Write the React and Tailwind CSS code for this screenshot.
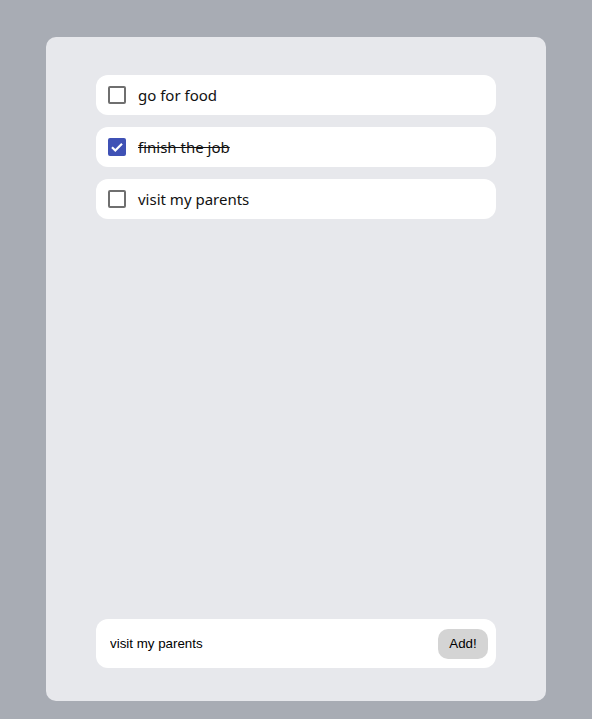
import { useState } from 'react'

const initialTodos = [
  { id: 1, text: 'go for food', done: false },
  { id: 2, text: 'finish the job', done: true },
  { id: 3, text: 'visit my parents', done: false }
]

function Checkbox({ checked, onChange }) {
  return (
    <span className="relative flex h-[18px] w-[18px] shrink-0">
      <input
        type="checkbox"
        checked={checked}
        onChange={onChange}
        className="peer m-0 h-[18px] w-[18px] cursor-pointer appearance-none rounded-[2px] border-2 border-[#6f6f6f] bg-white checked:border-[#3f51b5] checked:bg-[#3f51b5]"
      />
      {checked && (
        <svg
          viewBox="0 0 18 18"
          className="pointer-events-none absolute inset-0 h-[18px] w-[18px]"
        >
          <path
            d="M4 9.3l3.3 3.2L14 5.8"
            fill="none"
            stroke="white"
            strokeWidth="2.2"
          />
        </svg>
      )}
    </span>
  )
}

export default function App() {
  const [todos, setTodos] = useState(initialTodos)
  const [draft, setDraft] = useState('visit my parents')

  const toggle = (id) =>
    setTodos(todos.map((t) => (t.id === id ? { ...t, done: !t.done } : t)))

  const add = () => {
    if (!draft.trim()) return
    setTodos([...todos, { id: Date.now(), text: draft, done: false }])
    setDraft('')
  }

  return (
    <div className="min-h-[719px] bg-[#a8acb4] px-[46px] pt-[37px] pb-[18px]">
      <div className="flex h-[664px] w-[500px] flex-col rounded-[10px] bg-[#e7e8ec] px-[50px] pt-[38px] pb-[33px]">
        {/* List */}
        <ul className="flex flex-1 flex-col gap-3">
          {todos.map((todo) => (
            <li
              key={todo.id}
              className="flex h-10 items-center gap-3 rounded-xl bg-white px-3"
            >
              <Checkbox checked={todo.done} onChange={() => toggle(todo.id)} />
              <span
                className={
                  'text-[15px] text-[#111] font-["Noto_Sans",sans-serif] ' +
                  (todo.done ? 'line-through' : '')
                }
              >
                {todo.text}
              </span>
            </li>
          ))}
        </ul>

        {/* Input */}
        <div className="flex h-[49px] items-center rounded-xl bg-white pl-[14px] pr-2">
          <input
            value={draft}
            onChange={(e) => setDraft(e.target.value)}
            className="flex-1 bg-transparent text-[13.33px] text-black outline-none font-['Liberation_Sans',sans-serif]"
          />
          <button
            onClick={add}
            className="h-[30px] w-[50px] rounded-[10px] bg-[#d4d4d4] text-[13.33px] text-black font-['Liberation_Sans',sans-serif]"
          >
            Add!
          </button>
        </div>
      </div>
    </div>
  )
}
